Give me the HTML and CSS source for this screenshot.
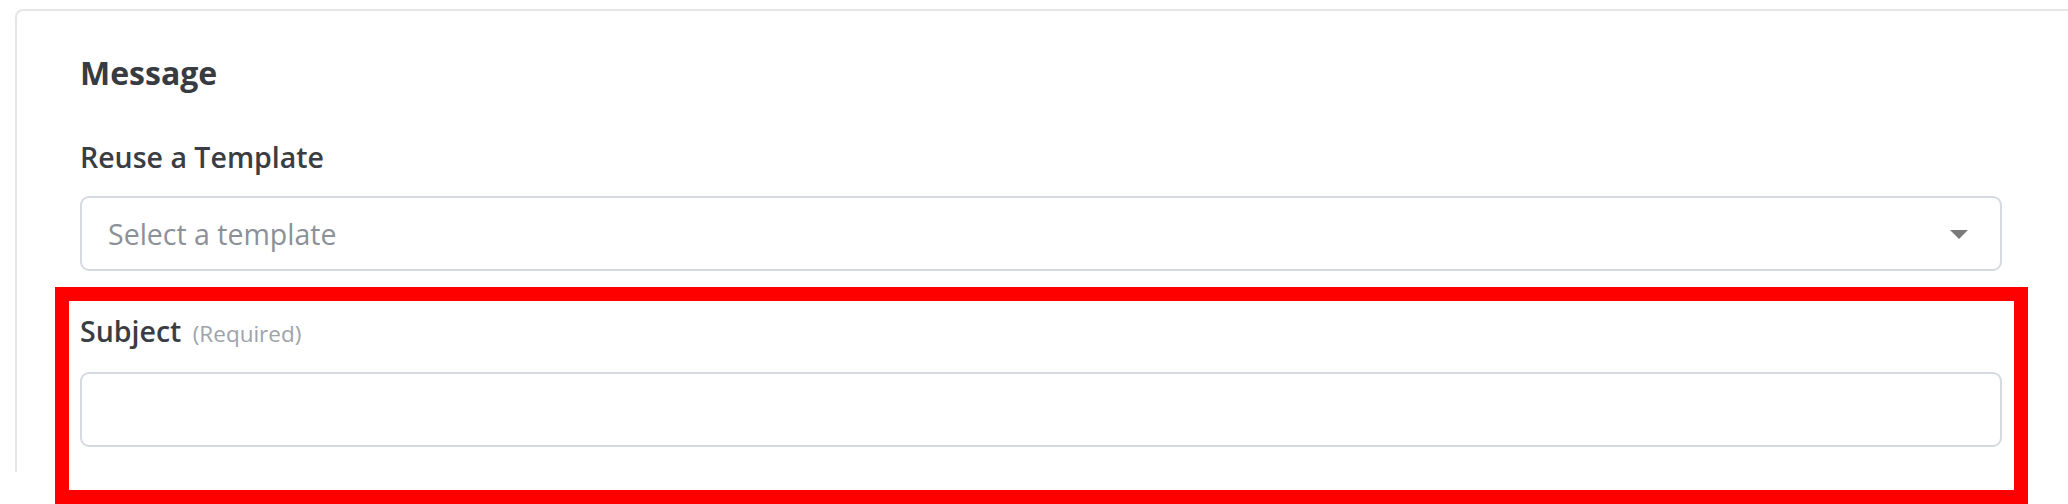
FILE: index.html
```html
<!DOCTYPE html>
<html lang="en">
<head>
<meta charset="utf-8">
<title>Message</title>
<link rel="stylesheet" href="styles.css">
</head>
<body>
<div class="page">
  <section class="card">
    <h2 class="card-title">Message</h2>
    <div class="field">
      <label class="field-label">Reuse a Template</label>
      <div class="select">
        <span class="select-placeholder">Select a template</span>
        <svg class="select-caret" width="18" height="9" viewBox="0 0 18 9"><path d="M0 0H18L9 9Z" fill="#7a7a7a"/></svg>
      </div>
    </div>
    <div class="field field-subject">
      <label class="field-label">Subject <span class="field-hint">(Required)</span></label>
      <div class="text-input"></div>
    </div>
  </section>
  <div class="highlight"></div>
</div>
</body>
</html>
```
FILE: styles.css
```css
html, body {
  margin: 0;
  padding: 0;
  background: #ffffff;
  overflow: hidden;
}
body {
  width: 2068px;
  height: 504px;
  font-family: "Open Sans", "Noto Sans", sans-serif;
  color: #3a3a3a;
}
.page {
  position: relative;
  height: 504px;
  padding-top: 9px;
  box-sizing: border-box;
}
.card {
  margin-left: 15px;
  margin-right: -20px;
  height: 463px;
  box-sizing: border-box;
  border: 2px solid #e6e6e6;
  border-bottom: none;
  border-radius: 8px 8px 0 0;
  padding: 42px 84px 0 63px;
}
.card-title {
  margin: 0;
  font-size: 32px;
  line-height: 40px;
  font-weight: 700;
  color: #383b40;
}
.field {
  margin-top: 46px;
}
.field-subject {
  margin-top: 42px;
}
.field-label {
  display: block;
  font-size: 28.5px;
  line-height: 36px;
  font-weight: 600;
  color: #3a3d42;
}
.field-hint {
  font-size: 22.5px;
  font-weight: 400;
  color: #9ea3aa;
  margin-left: 4px;
}
.select {
  margin-top: 21px;
  height: 75px;
  box-sizing: border-box;
  border: 2px solid #d6dae0;
  border-radius: 9px;
  display: flex;
  align-items: center;
  justify-content: space-between;
  padding: 0 32px 0 26px;
}
.select-placeholder {
  font-size: 28.5px;
  line-height: 36px;
  color: #8c9198;
}
.select-caret {
  display: block;
  margin-top: 2px;
}
.text-input {
  margin-top: 20px;
  height: 75px;
  box-sizing: border-box;
  border: 2px solid #d6dae0;
  border-radius: 9px;
}
.highlight {
  position: absolute;
  left: 55px;
  top: 287px;
  width: 1973px;
  height: 217px;
  box-sizing: border-box;
  border: 14px solid #ff0000;
}
```
